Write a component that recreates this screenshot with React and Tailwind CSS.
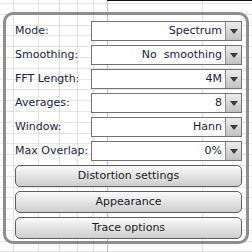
const rows = [
  { label: "Mode:", value: "Spectrum" },
  { label: "Smoothing:", value: "No\u00a0\u00a0smoothing" },
  { label: "FFT Length:", value: "4M" },
  { label: "Averages:", value: "8" },
  { label: "Window:", value: "Hann" },
  { label: "Max Overlap:", value: "0%" },
];

const buttons = ["Distortion settings", "Appearance", "Trace options"];

const vLines = [13, 38, 59, 77, 93, 107, 202];
const hLines = Array.from({ length: 24 }, (_, i) => 3 + Math.round(i * 10.8));

const GridBackdrop = () => (
  <svg className="absolute inset-0" width="252" height="252">
    {hLines.map((y) => (
      <line key={"h" + y} x1="0" x2="252" y1={y + 0.5} y2={y + 0.5} stroke="#e6e6e6" />
    ))}
    {vLines.map((x) => (
      <line key={"v" + x} x1={x + 0.5} x2={x + 0.5} y1="0" y2="252" stroke={x === 107 ? "#c4c4c4" : "#e2e2e2"} />
    ))}
    <line x1="107" x2="252" y1="0.5" y2="0.5" stroke="#111" />
  </svg>
);

const Dropdown = ({ value }) => (
  <div className="flex h-[20px] w-[151px] border border-[#737373] bg-white">
    <div className="flex flex-1 items-center justify-end pr-[3px] text-[11px] text-[#1c1a3c]">
      {value}
    </div>
    <div className="flex w-[16px] items-center justify-center border-l border-[#8a8a8a] bg-gradient-to-b from-[#ededed] to-[#c2c2c2]">
      <svg width="8" height="5" viewBox="0 0 8 5">
        <path d="M0 0 H8 L4 5 Z" fill="#3c3c3c" />
      </svg>
    </div>
  </div>
);

export default function App() {
  return (
    <div
      className="relative h-[252px] w-[252px] overflow-hidden bg-white"
      style={{ fontFamily: '"DejaVu Sans", Verdana, sans-serif' }}
    >
      <GridBackdrop />
      <div className="relative ml-[3px] mt-[12px] flex h-[232px] w-[246px] flex-col rounded-[10px] border-[3px] border-[#8e8e8e] pl-[9px] pr-[4px] pt-[6px]">
        {/* Settings rows */}
        <div className="flex flex-col gap-[4px]">
          {rows.map((r) => (
            <div key={r.label} className="flex h-[20px] items-center">
              <div className="w-[76px] whitespace-nowrap text-[11px] text-[#221c40]">{r.label}</div>
              <Dropdown value={r.value} />
            </div>
          ))}
        </div>

        {/* Buttons */}
        <div className="mt-[4px] flex flex-col gap-[4px]">
          {buttons.map((b) => (
            <button
              key={b}
              className="flex h-[22px] w-[227px] items-center justify-center rounded-[5px] border border-[#5e5e5e] bg-gradient-to-b from-[#fbfbfb] to-[#cdcdcd] text-[11px] text-[#1a1a2a]"
            >
              {b}
            </button>
          ))}
        </div>
      </div>
    </div>
  );
}
